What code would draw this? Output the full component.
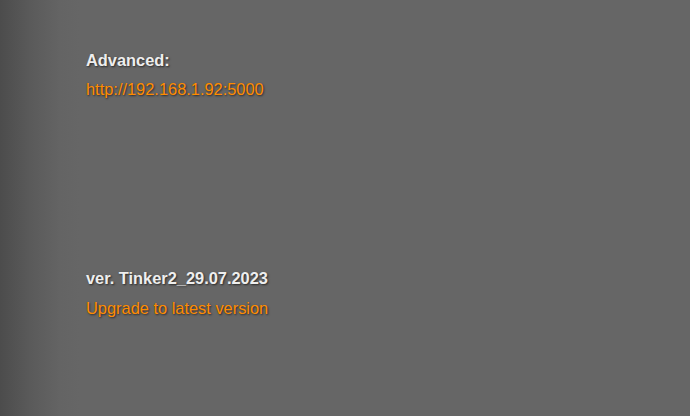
export default function App() {
  const shadow = "[text-shadow:1px_1px_2px_rgba(0,0,0,0.6)]";
  return (
    <div
      className="w-[690px] h-[416px] bg-[linear-gradient(to_right,#4c4c4c_0px,#5a5a5a_30px,#646464_60px,#666666_80px,#666666_100%)] pl-[86px] pt-[50px] text-[16.4px] leading-[20px]"
      style={{ fontFamily: '"Liberation Sans", Arial, sans-serif' }}
    >
      <div className={`font-bold text-[#eeeeee] ${shadow}`}>Advanced:</div>
      <div className={`mt-[9px] text-[#ff8c00] ${shadow}`}>http://192.168.1.92:5000</div>
      <div className={`mt-[169px] font-bold text-[#eeeeee] ${shadow}`}>ver. Tinker2_29.07.2023</div>
      <div className={`mt-[10px] text-[#ff8c00] ${shadow}`}>Upgrade to latest version</div>
    </div>
  );
}
